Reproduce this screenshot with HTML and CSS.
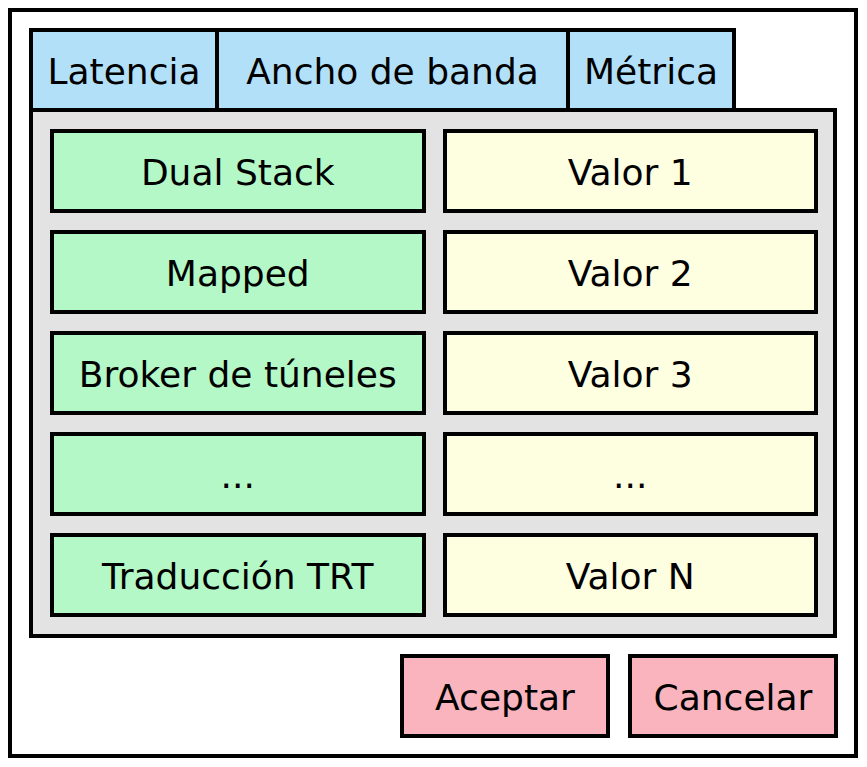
FILE: index.html
```html
<!DOCTYPE html>
<html lang="es">
<head>
    <meta charset="UTF-8">
    <title>Métrica</title>
    <link rel="stylesheet" href="styles.css">
</head>
<body>
<div class="dialog">
    <div class="tabs">
        <span class="tab tab-latency">Latencia</span>
        <span class="tab tab-bandwidth">Ancho de banda</span>
        <span class="tab tab-metric">Métrica</span>
    </div>
    <div class="panel">
        <div class="cell name">Dual Stack</div>
        <div class="cell value">Valor 1</div>
        <div class="cell name">Mapped</div>
        <div class="cell value">Valor 2</div>
        <div class="cell name">Broker de túneles</div>
        <div class="cell value">Valor 3</div>
        <div class="cell name">...</div>
        <div class="cell value">...</div>
        <div class="cell name">Traducción TRT</div>
        <div class="cell value">Valor N</div>
    </div>
    <div class="buttons">
        <span class="button">Aceptar</span>
        <span class="button">Cancelar</span>
    </div>
</div>
</body>
</html>
```

FILE: styles.css
```css
body {
    margin: 0;
    background-color: #fff;
    font-family: "DejaVu Sans", "Open Sans", sans-serif;
    font-size: 36px;
    color: #000;
}

div.dialog {
    width: 850px;
    height: 750px;
    margin: 8px;
    border: 4px solid #000;
    box-sizing: border-box;
    padding: 16px 16px 16px 17px;
    display: flex;
    flex-direction: column;
}

div.tabs {
    display: flex;
    height: 80px;
}

span.tab {
    display: flex;
    align-items: center;
    justify-content: center;
    padding-top: 3px;
    border: 4px solid #000;
    border-bottom: none;
    background-color: #b3e0f9;
    box-sizing: border-box;
}

span.tab + span.tab {
    margin-left: -4px;
}

span.tab-latency {
    width: 190px;
}

span.tab-bandwidth {
    width: 355px;
}

span.tab-metric {
    width: 170px;
}

div.panel {
    height: 530px;
    margin-right: 1px;
    border: 4px solid #000;
    box-sizing: border-box;
    background-color: #e3e3e3;
    padding: 17px 15px 16px 17px;
    display: grid;
    grid-template-columns: 1fr 1fr;
    grid-template-rows: repeat(5, 84px);
    gap: 17px;
}

div.cell {
    border: 4px solid #000;
    padding-top: 3px;
    box-sizing: border-box;
    display: flex;
    align-items: center;
    justify-content: center;
}

div.cell.name {
    background-color: #b3f8c6;
}

div.cell.value {
    background-color: #fefee0;
}

div.buttons {
    display: flex;
    justify-content: flex-end;
    gap: 18px;
    margin-top: 16px;
}

span.button {
    width: 210px;
    height: 84px;
    padding-top: 3px;
    border: 4px solid #000;
    box-sizing: border-box;
    background-color: #f9b4be;
    display: flex;
    align-items: center;
    justify-content: center;
}
```
